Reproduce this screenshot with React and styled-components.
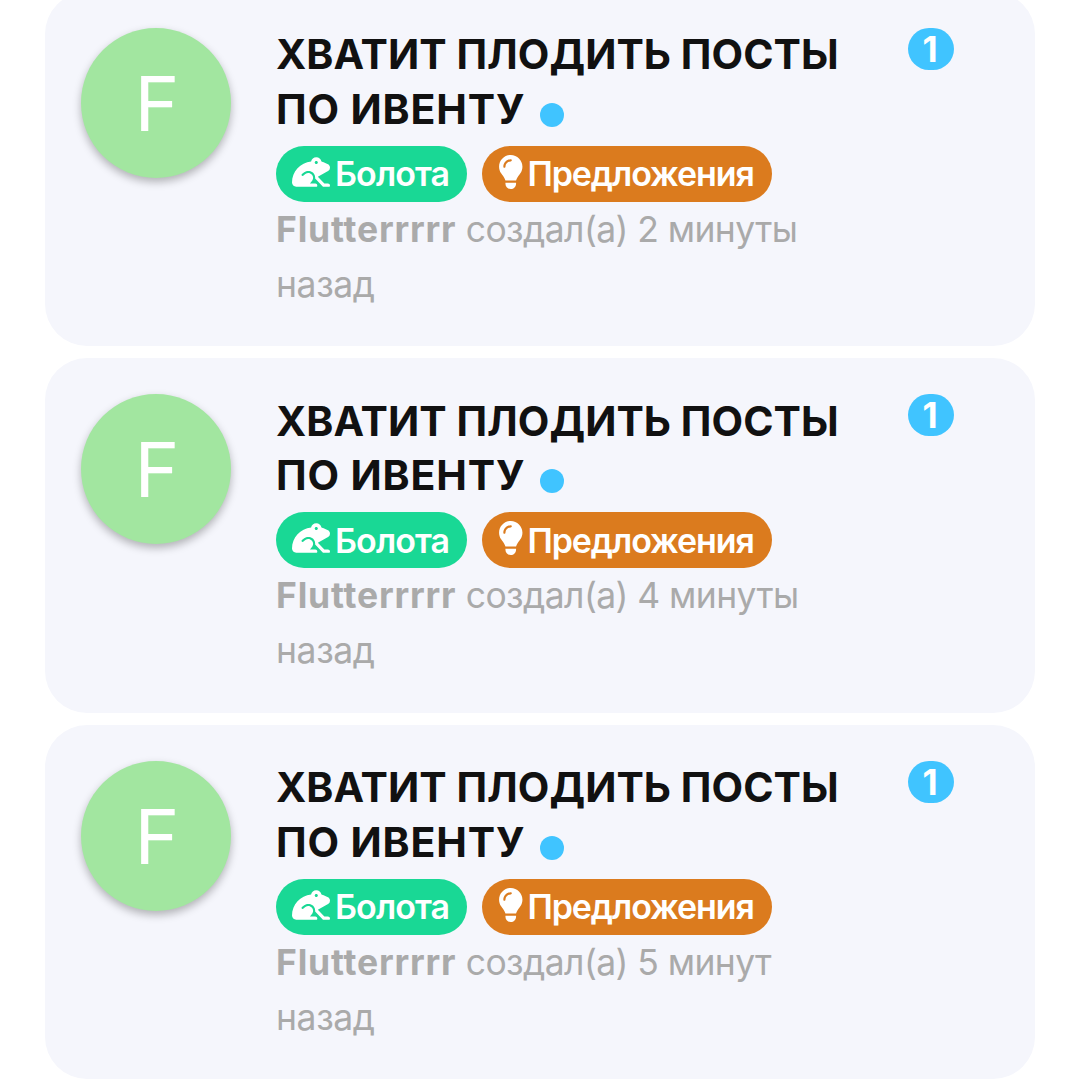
import React from 'react';
import styled, { createGlobalStyle } from 'styled-components';
import { FaFrog } from 'react-icons/fa';
import { FaLightbulb } from 'react-icons/fa6';

const GlobalStyle = createGlobalStyle`
  * {
    box-sizing: border-box;
  }
  body {
    margin: 0;
    background: #fff;
    font-family: Inter, "Open Sans", sans-serif;
  }
`

const Page = styled.main`
  width: 1080px;
  height: 1084px;
  overflow: hidden;
`

const List = styled.ul`
  display: flex;
  flex-direction: column;
  gap: 12px;
  list-style: none;
  margin: -8.5px 45px 0;
  padding: 0;
`

const Card = styled.li`
  display: flex;
  align-items: flex-start;
  height: 354.5px;
  padding: 36px 81px 0 36px;
  border-radius: 42px;
  background: #f5f6fc;
`

const Avatar = styled.div`
  flex: none;
  width: 150px;
  height: 150px;
  margin-right: 45px;
  padding-left: 2px;
  border-radius: 50%;
  background: #a2e6a0;
  box-shadow: 0 4px 9px rgba(0, 0, 0, 0.28);
  color: #fff;
  font-size: 76px;
  font-weight: 400;
  line-height: 150px;
  text-align: center;
`

const Content = styled.div`
  width: 600px;
`

const Title = styled.h2`
  margin: 0;
  padding-bottom: 1px;
  color: #111;
  font-size: 41px;
  font-weight: 650;
  line-height: 54.5px;
  white-space: nowrap;
`

const TitleLine = styled.span`
  position: relative;
  top: -0.5px;
  letter-spacing: ${props => props.$spacing}px;
`

const Unread = styled.span`
  display: inline-block;
  width: 24px;
  height: 24px;
  margin-left: 15px;
  border-radius: 50%;
  background: #40c4ff;
  vertical-align: -2.5px;
`

const Tags = styled.div`
  display: flex;
  gap: 15px;
  height: 56px;
  margin-top: 8px;
`

const Tag = styled.span`
  display: flex;
  align-items: center;
  width: ${props => props.$width}px;
  height: 56px;
  padding-left: 16px;
  border-radius: 28px;
  background: ${props => props.$color};
  color: #fff;
  font-size: 34px;
  font-weight: 640;
  letter-spacing: ${props => props.$spacing}px;
  white-space: nowrap;
  svg {
    flex: none;
    width: ${props => props.$icon}px;
    height: 34px;
    margin: 0 ${props => props.$gap}px 4px 0;
  }
`

const Meta = styled.p`
  margin: 0;
  color: #aaa;
  font-size: 35.5px;
  letter-spacing: -0.4px;
  line-height: 55px;
  white-space: nowrap;
`

const Author = styled.b`
  font-weight: 700;
  letter-spacing: 0.8px;
  margin-right: 9.5px;
`

const Created = styled.span`
  letter-spacing: -0.6px;
`

const Counter = styled.span`
  flex: none;
  width: 46px;
  height: 42px;
  margin-left: auto;
  padding-right: 2px;
  border-radius: 21px;
  background: #40c4ff;
  color: #fff;
  font-size: 35px;
  font-weight: 700;
  line-height: 42px;
  text-align: center;
`

const posts = [
  { id: 1, time: '2 минуты' },
  { id: 2, time: '4 минуты' },
  { id: 3, time: '5 минут' },
]

function Post({ time }) {
  return (
    <Card>
      <Avatar>F</Avatar>
      <Content>
        <Title>
          <TitleLine $spacing={0.05}>ХВАТИТ ПЛОДИТЬ ПОСТЫ</TitleLine><br />
          <TitleLine $spacing={0.85}>ПО ИВЕНТУ</TitleLine><Unread />
        </Title>
        <Tags>
          <Tag $color='#19d895' $width={191} $icon={38} $gap={5} $spacing={-0.9}>
            <FaFrog />
            <span>Болота</span>
          </Tag>
          <Tag $color='#db7b1e' $width={290} $icon={25.5} $gap={4} $spacing={-1.1}>
            <FaLightbulb />
            <span>Предложения</span>
          </Tag>
        </Tags>
        <Meta>
          <Author>Flutterrrrr</Author><Created>создал(а) {time}</Created><br />
          <span>назад</span>
        </Meta>
      </Content>
      <Counter>1</Counter>
    </Card>
  )
}

function App() {
  return (
    <>
      <GlobalStyle />
      <Page>
        <List>
          {posts.map(post => <Post key={post.id} time={post.time} />)}
        </List>
      </Page>
    </>
  )
}

export default App
